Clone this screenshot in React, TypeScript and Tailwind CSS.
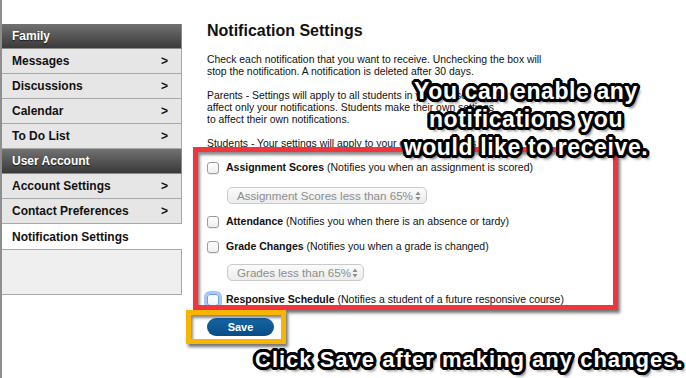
import { ReactNode } from "react";

const sideItems = {
  family: ["Messages", "Discussions", "Calendar", "To Do List"],
  account: ["Account Settings", "Contact Preferences"],
};

const outline =
  "text-white font-bold [text-shadow:3px_0_0_#000,-3px_0_0_#000,0_3px_0_#000,0_-3px_0_#000,2px_2px_0_#000,-2px_2px_0_#000,2px_-2px_0_#000,-2px_-2px_0_#000,3px_1px_0_#000,3px_-1px_0_#000,-3px_1px_0_#000,-3px_-1px_0_#000,1px_3px_0_#000,-1px_3px_0_#000,1px_-3px_0_#000,-1px_-3px_0_#000,3px_4px_3px_rgba(0,0,0,0.6)]";

const SideHeader = ({ label }: { label: string }) => (
  <div className="h-[25px] flex items-center pl-[10px] border-b border-r border-[#8a8a8a] bg-gradient-to-b from-[#727272] to-[#3a3a3a] text-white text-[12px] font-bold [text-shadow:0_1px_1px_rgba(0,0,0,0.7)]">
    {label}
  </div>
);

const SideItem = ({ label }: { label: string }) => (
  <div className="h-[25px] flex items-center justify-between pl-[10px] pr-[13px] border-b border-r border-[#a8a8a8] bg-[#e6e6e6] text-[#111] text-[12px] font-bold">
    <span>{label}</span>
    <span className="text-[12px]">&gt;</span>
  </div>
);

const Checkbox = ({ focused }: { focused?: boolean }) => (
  <span
    className={
      focused
        ? "w-[12px] h-[12px] rounded-[3px] border border-[#6c9fe0] bg-gradient-to-b from-white to-[#eef2f8] ring-[3px] ring-[#a7c6f2] shrink-0"
        : "w-[12px] h-[12px] rounded-[3px] border border-[#9c9c9c] bg-gradient-to-b from-white to-[#eeeeee] shadow-[0_1px_1px_rgba(0,0,0,0.08)] shrink-0"
    }
  />
);

const Row = ({
  title,
  desc,
  focused,
  className,
}: {
  title: string;
  desc: string;
  focused?: boolean;
  className: string;
}) => (
  <div className={`h-[16px] flex items-center gap-[7px] ${className}`}>
    <Checkbox focused={focused} />
    <span className="text-[10.5px] text-[#111] whitespace-nowrap">
      <span className="font-bold">{title}</span> {desc}
    </span>
  </div>
);

const FakeSelect = ({ children, className }: { children: ReactNode; className: string }) => (
  <div
    className={`h-[17px] ml-[20px] flex items-center justify-between pl-[9px] pr-[5px] rounded-[5px] border border-[#c9c9c9] bg-gradient-to-b from-[#fbfbfb] to-[#ececec] text-[11.6px] text-[#8d8d8d] ${className}`}
  >
    <span className="whitespace-nowrap">{children}</span>
    <svg width="6" height="10" viewBox="0 0 6 10" className="shrink-0">
      <path d="M3 0.5 L5.5 4 L0.5 4 Z" fill="#8d8d8d" />
      <path d="M3 9.5 L5.5 6 L0.5 6 Z" fill="#8d8d8d" />
    </svg>
  </div>
);

export default function App() {
  return (
    <div className="relative w-[686px] h-[378px] overflow-hidden bg-white font-['Liberation_Sans',Arial,sans-serif] flex">
      {/* window edge */}
      <div className="w-[2px] bg-[#8e8e8e] shrink-0" />

      {/* Sidebar */}
      <aside className="w-[180px] pt-[24px] shrink-0">
        <SideHeader label="Family" />
        {sideItems.family.map((l) => (
          <SideItem key={l} label={l} />
        ))}
        <SideHeader label="User Account" />
        {sideItems.account.map((l) => (
          <SideItem key={l} label={l} />
        ))}
        <div className="h-[25px] flex items-center pl-[10px] bg-white text-[#111] text-[12px] font-bold">
          Notification Settings
        </div>
        <div className="h-[46px] bg-[#efefef] border-t border-b border-r border-[#a8a8a8]" />
      </aside>

      {/* Main content */}
      <main className="pl-[25px] pt-[21px] text-[#111]">
        <h1 className="text-[16px] leading-[20px] font-bold">Notification Settings</h1>
        <p className="mt-[13px] text-[10.4px] leading-[12px] whitespace-nowrap">
          Check each notification that you want to receive. Unchecking the box will
          <br />
          stop the notification. A notification is deleted after 30 days.
        </p>
        <p className="mt-[12px] text-[10.4px] leading-[12px] whitespace-nowrap">
          Parents - Settings will apply to all students in your household and will
          <br />
          affect only your notifications. Students make their own settings
          <br />
          to affect their own notifications.
        </p>
        <p className="mt-[12px] text-[10.4px] leading-[12px] whitespace-nowrap">
          Students - Your settings will apply to your own notifications only.
        </p>

        <Row
          className="mt-[10px]"
          title="Assignment Scores"
          desc="(Notifies you when an assignment is scored)"
        />
        <FakeSelect className="mt-[11px] w-[200px]">Assignment Scores less than 65%</FakeSelect>
        <Row
          className="mt-[10px]"
          title="Attendance"
          desc="(Notifies you when there is an absence or tardy)"
        />
        <Row
          className="mt-[9px]"
          title="Grade Changes"
          desc="(Notifies you when a grade is changed)"
        />
        <FakeSelect className="mt-[9px] w-[137px]">Grades less than 65%</FakeSelect>
        <Row
          className="mt-[11px]"
          focused
          title="Responsive Schedule"
          desc="(Notifies a student of a future responsive course)"
        />
        <button className="mt-[10px] w-[67px] h-[18px] rounded-full bg-gradient-to-b from-[#1765a3] to-[#064c86] text-white text-[11px] font-bold flex items-center justify-center">
          Save
        </button>
      </main>

      {/* Annotations overlay */}
      <div className="absolute left-[193px] top-[147px] w-[425px] h-[163px] border-[5px] border-[#f2343f] shadow-[2px_3px_3px_rgba(0,0,0,0.55),inset_2px_3px_3px_rgba(0,0,0,0.45)]" />
      <div className="absolute left-[186px] top-[310px] w-[100px] h-[34px] border-[5px] border-[#f7b400] shadow-[2px_3px_3px_rgba(0,0,0,0.55),inset_2px_3px_3px_rgba(0,0,0,0.45)]" />

      <div
        className={`absolute left-[376px] top-[77px] w-[300px] text-center text-[23px] leading-[28px] tracking-[0.6px] ${outline}`}
      >
        You can enable any
        <br />
        notifications you
        <br />
        would like to receive.
      </div>
      <div
        className={`absolute left-[255px] top-[348px] whitespace-nowrap text-[22px] leading-[24px] tracking-[1px] ${outline}`}
      >
        Click Save after making any changes.
      </div>
    </div>
  );
}
